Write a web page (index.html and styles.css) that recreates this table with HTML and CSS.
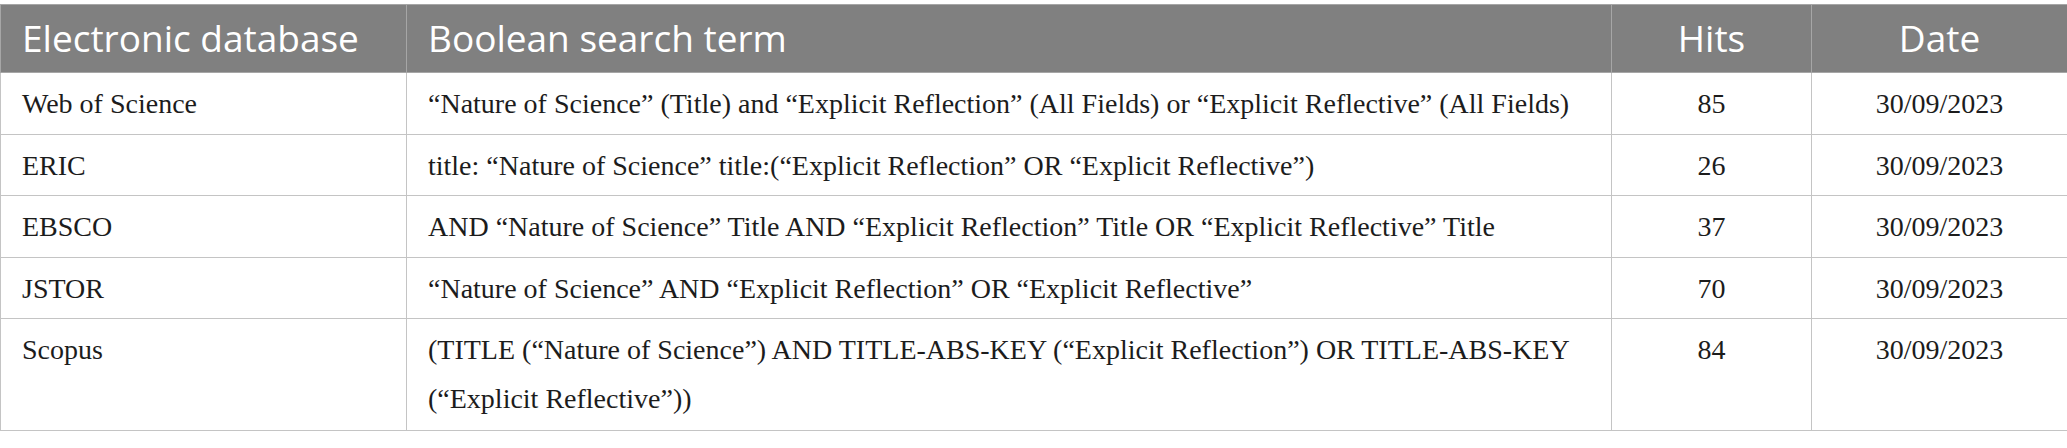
FILE: index.html
```html
<!DOCTYPE html>
<html lang="en">
<head>
<meta charset="utf-8">
<title>Search terms</title>
<link rel="stylesheet" href="styles.css">
</head>
<body>
<table class="search-table">
  <colgroup>
    <col class="c-db">
    <col class="c-term">
    <col class="c-hits">
    <col class="c-date">
  </colgroup>
  <thead>
    <tr>
      <th>Electronic database</th>
      <th>Boolean search term</th>
      <th class="center">Hits</th>
      <th class="center">Date</th>
    </tr>
  </thead>
  <tbody>
    <tr>
      <td>Web of Science</td>
      <td>“Nature of Science” (Title) and “Explicit Reflection” (All Fields) or “Explicit Reflective” (All Fields)</td>
      <td class="center">85</td>
      <td class="center">30/09/2023</td>
    </tr>
    <tr>
      <td>ERIC</td>
      <td>title: “Nature of Science” title:(“Explicit Reflection” OR “Explicit Reflective”)</td>
      <td class="center">26</td>
      <td class="center">30/09/2023</td>
    </tr>
    <tr>
      <td>EBSCO</td>
      <td>AND “Nature of Science” Title AND “Explicit Reflection” Title OR “Explicit Reflective” Title</td>
      <td class="center">37</td>
      <td class="center">30/09/2023</td>
    </tr>
    <tr>
      <td>JSTOR</td>
      <td>“Nature of Science” AND “Explicit Reflection” OR “Explicit Reflective”</td>
      <td class="center">70</td>
      <td class="center">30/09/2023</td>
    </tr>
    <tr class="last">
      <td>Scopus</td>
      <td>(TITLE (“Nature of Science”) AND TITLE-ABS-KEY (“Explicit Reflection”) OR TITLE-ABS-KEY (“Explicit Reflective”))</td>
      <td class="center">84</td>
      <td class="center">30/09/2023</td>
    </tr>
  </tbody>
</table>
</body>
</html>
```

FILE: styles.css
```css
html, body {
  margin: 0;
  padding: 0;
  background: #ffffff;
}

body {
  padding-top: 4px;
}

.search-table {
  width: 2067px;
  border-collapse: collapse;
  table-layout: fixed;
}

.c-db { width: 406px; }
.c-term { width: 1205px; }
.c-hits { width: 200px; }
.c-date { width: 256px; }

.search-table th {
  background: #808080;
  color: #ffffff;
  font-family: "Open Sans", "Noto Sans", sans-serif;
  font-weight: 400;
  font-size: 37px;
  line-height: 48px;
  text-align: left;
  padding: 9px 21px 10px;
  border: 1px solid #a6a6a6;
}

.search-table td {
  font-family: "Liberation Serif", "Times New Roman", serif;
  font-size: 28px;
  line-height: 48.5px;
  color: #1c1c1c;
  vertical-align: top;
  padding: 7px 21px 5px;
  border: 1px solid #c4c4c4;
}

.search-table .last td {
  padding-bottom: 7px;
}

.search-table .center {
  text-align: center;
}
```
